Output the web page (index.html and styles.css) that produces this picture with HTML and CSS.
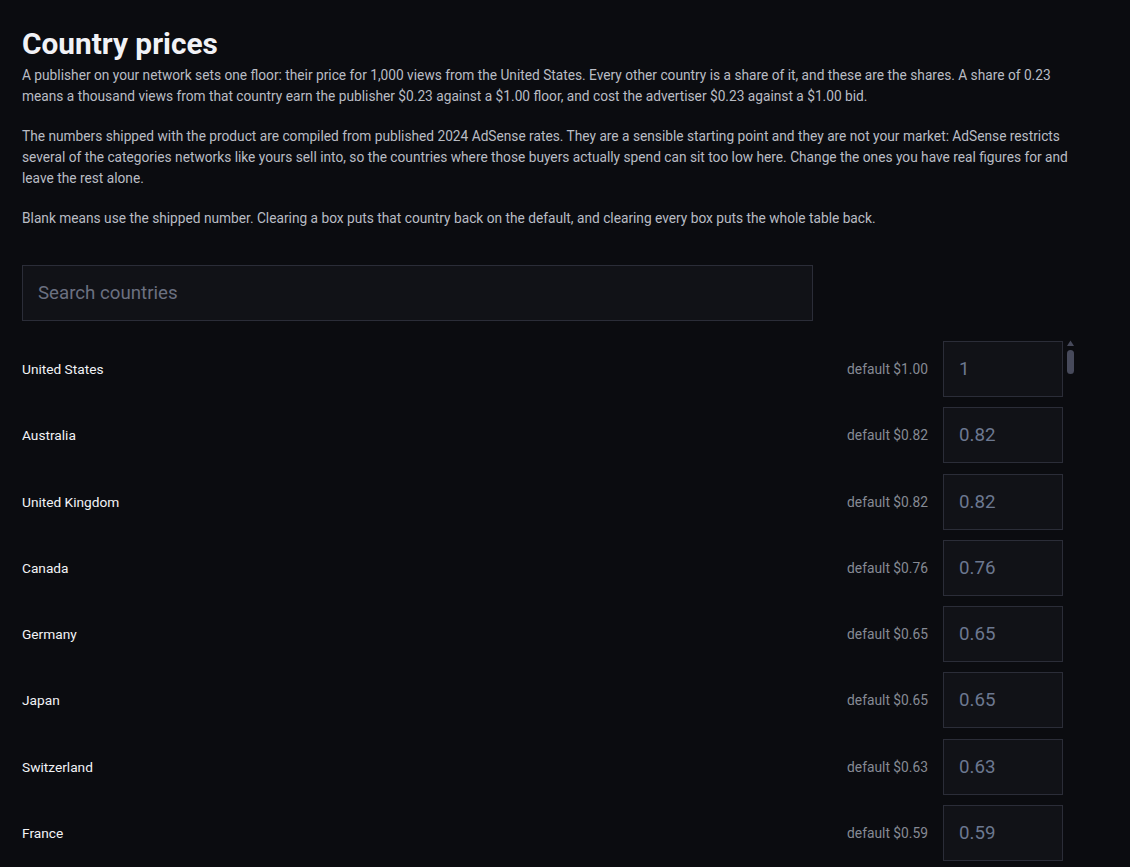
FILE: index.html
```html
<!DOCTYPE html>
<html lang="en">
<head>
<meta charset="utf-8">
<title>Country prices</title>
<link rel="stylesheet" href="styles.css">
</head>
<body>
<main class="page">
  <h1 class="title">Country prices</h1>
  <p class="intro">A publisher on your network sets one floor: their price for 1,000 views from the United States. Every other country is a share of it, and these are the shares. A share of 0.23 means a thousand views from that country earn the publisher $0.23 against a $1.00 floor, and cost the advertiser $0.23 against a $1.00 bid.</p>
  <p class="intro">The numbers shipped with the product are compiled from published 2024 AdSense rates. They are a sensible starting point and they are not your market: AdSense restricts several of the categories networks like yours sell into, so the countries where those buyers actually spend can sit too low here. Change the ones you have real figures for and leave the rest alone.</p>
  <p class="intro">Blank means use the shipped number. Clearing a box puts that country back on the default, and clearing every box puts the whole table back.</p>

  <input class="search" type="text" placeholder="Search countries">

  <div class="list-wrap">
    <div class="list" id="list">
      <div class="row"><span class="name">United States</span><span class="default">default $1.00</span><input class="share" type="text" placeholder="1"></div>
      <div class="row"><span class="name">Australia</span><span class="default">default $0.82</span><input class="share" type="text" placeholder="0.82"></div>
      <div class="row"><span class="name">United Kingdom</span><span class="default">default $0.82</span><input class="share" type="text" placeholder="0.82"></div>
      <div class="row"><span class="name">Canada</span><span class="default">default $0.76</span><input class="share" type="text" placeholder="0.76"></div>
      <div class="row"><span class="name">Germany</span><span class="default">default $0.65</span><input class="share" type="text" placeholder="0.65"></div>
      <div class="row"><span class="name">Japan</span><span class="default">default $0.65</span><input class="share" type="text" placeholder="0.65"></div>
      <div class="row"><span class="name">Switzerland</span><span class="default">default $0.63</span><input class="share" type="text" placeholder="0.63"></div>
      <div class="row"><span class="name">France</span><span class="default">default $0.59</span><input class="share" type="text" placeholder="0.59"></div>
      <div class="row"><span class="name">Netherlands</span><span class="default">default $0.57</span><input class="share" type="text" placeholder="0.57"></div>
    </div>
    <div class="scrollbar" aria-hidden="true">
      <svg class="scroll-arrow" width="11" height="7" viewBox="0 0 11 7"><polygon points="2,6 5.5,0.5 9,6" fill="#474a5b"/></svg>
      <div class="scroll-track"><div class="scroll-thumb" id="thumb"></div></div>
      <svg class="scroll-arrow" width="11" height="7" viewBox="0 0 11 7"><polygon points="2,1 5.5,6.5 9,1" fill="#474a5b"/></svg>
    </div>
  </div>
</main>
<script src="app.js"></script>
</body>
</html>
```

FILE: styles.css
```css
html, body {
  margin: 0;
  padding: 0;
  background: #0b0c10;
}

body {
  font-family: Roboto, "Liberation Sans", Arial, sans-serif;
  color: #b9bcc4;
}

.page {
  padding: 27px 22px 0 22px;
}

.title {
  margin: 0 0 4px 0;
  font-size: 29.8px;
  line-height: 34px;
  font-weight: 700;
  color: #f1f2f6;
}

.intro {
  max-width: 1060px;
  margin: 0 0 19px 0;
  font-size: 13.73px;
  line-height: 21px;
  color: #b9bcc4;
}

.intro:last-of-type {
  margin-bottom: 36px;
}

.search {
  display: block;
  box-sizing: border-box;
  width: 791px;
  height: 56px;
  margin: 0 0 20px 0;
  padding: 0 15px;
  background: #111217;
  border: 1px solid #2b2d38;
  border-radius: 0;
  color: #d0d3da;
  font-family: inherit;
  font-size: 18.7px;
  outline: none;
}

.search::placeholder {
  color: #6b7080;
}

.list-wrap {
  display: flex;
  width: 1054px;
  height: 560px;
}

.list {
  flex: 1 1 auto;
  min-width: 0;
  height: 100%;
  overflow-y: auto;
  scrollbar-width: none;
  display: flex;
  flex-direction: column;
  gap: 10.3px;
}

.list::-webkit-scrollbar {
  display: none;
}

.scrollbar {
  flex: 0 0 11px;
  display: flex;
  flex-direction: column;
  height: 100%;
}

.scroll-arrow {
  display: block;
  flex: 0 0 auto;
  margin-top: -1px;
}

.scroll-track {
  flex: 1 1 auto;
  padding-top: 3px;
}

.scroll-thumb {
  width: 7px;
  height: 24px;
  margin-left: 2px;
  border-radius: 4px;
  background: #474a5b;
}

.row {
  display: flex;
  align-items: center;
  flex: 0 0 auto;
  height: 56px;
  padding-right: 2px;
}

.name {
  flex: 1 1 auto;
  font-size: 13.7px;
  color: #f2f3f6;
}

.default {
  flex: 0 0 auto;
  margin-right: 15px;
  font-size: 13.8px;
  color: #868a94;
}

.share {
  flex: 0 0 auto;
  box-sizing: border-box;
  width: 120px;
  height: 56px;
  padding: 0 15px;
  background: #111217;
  border: 1px solid #2b2d38;
  border-radius: 0;
  color: #d0d3da;
  font-family: inherit;
  font-size: 18.7px;
  outline: none;
}

.share::placeholder {
  color: #6c7890;
}
```

FILE: app.js
```js
(function () {
  var names = [
    "Norway","Denmark","Sweden","New Zealand","Ireland","Belgium","Austria","Finland","Singapore","Luxembourg",
    "Iceland","Israel","Hong Kong","South Korea","Italy","Spain","United Arab Emirates","Qatar","Taiwan","Saudi Arabia",
    "Kuwait","Portugal","Czech Republic","Slovenia","Estonia","Poland","Greece","Slovakia","Lithuania","Latvia",
    "Hungary","Croatia","Cyprus","Malta","Bahrain","Oman","Chile","Uruguay","Puerto Rico","Mexico",
    "Brazil","Argentina","Romania","Bulgaria","Turkey","Malaysia","South Africa","Costa Rica","Panama","Colombia",
    "Peru","Thailand","China","Serbia","Montenegro","North Macedonia","Bosnia and Herzegovina","Albania","Kazakhstan","Georgia",
    "Armenia","Azerbaijan","Ukraine","Belarus","Moldova","Russia","Dominican Republic","Ecuador","Guatemala","Jamaica",
    "Trinidad and Tobago","Bahamas","Barbados","Paraguay","Bolivia","Honduras","El Salvador","Nicaragua","Venezuela","Cuba",
    "Philippines","Indonesia","Vietnam","India","Sri Lanka","Bangladesh","Pakistan","Nepal","Mongolia","Cambodia",
    "Laos","Myanmar","Brunei","Maldives","Bhutan","Jordan","Lebanon","Egypt","Morocco","Tunisia",
    "Algeria","Libya","Iraq","Iran","Syria","Yemen","Afghanistan","Uzbekistan","Kyrgyzstan","Tajikistan",
    "Turkmenistan","Nigeria","Kenya","Ghana","Ethiopia","Tanzania","Uganda","Rwanda","Senegal","Ivory Coast",
    "Cameroon","Angola","Zambia","Zimbabwe","Botswana","Namibia","Mozambique","Madagascar","Mauritius","Seychelles",
    "Malawi","Mali","Niger","Burkina Faso","Benin","Togo","Guinea","Sierra Leone","Liberia","Gambia",
    "Mauritania","Sudan","South Sudan","Somalia","Djibouti","Eritrea","Chad","Central African Republic","Congo","DR Congo",
    "Gabon","Equatorial Guinea","Burundi","Lesotho","Eswatini","Cape Verde","Comoros","Fiji","Papua New Guinea","Samoa",
    "Tonga","Vanuatu","Solomon Islands","Kiribati","Micronesia","Marshall Islands","Palau","Nauru","Tuvalu","Timor-Leste",
    "Haiti","Belize","Guyana","Suriname","Grenada","Saint Lucia","Dominica","Antigua and Barbuda","Saint Kitts and Nevis","Saint Vincent and the Grenadines",
    "Andorra","Monaco","Liechtenstein","San Marino","Greenland","Faroe Islands","Bermuda","Cayman Islands","Guam","Macau",
    "Gibraltar","Aruba","Curaçao","Kosovo","New Caledonia","French Polynesia","Réunion","Martinique","Guadeloupe","Jersey"
  ];
  var list = document.getElementById("list");
  var thumb = document.getElementById("thumb");
  var value = 0.57;
  names.forEach(function (name, i) {
    value = Math.max(0.01, value - (i < 40 ? 0.011 : 0.0018));
    var v = value.toFixed(2);
    var row = document.createElement("div");
    row.className = "row";
    var n = document.createElement("span");
    n.className = "name";
    n.textContent = name;
    var d = document.createElement("span");
    d.className = "default";
    d.textContent = "default $" + v;
    var input = document.createElement("input");
    input.className = "share";
    input.type = "text";
    input.placeholder = v;
    row.appendChild(n);
    row.appendChild(d);
    row.appendChild(input);
    list.appendChild(row);
  });

  function syncThumb() {
    var track = thumb.parentNode;
    var range = list.scrollHeight - list.clientHeight;
    var travel = track.clientHeight - thumb.offsetHeight - 6;
    var y = range > 0 ? (list.scrollTop / range) * travel : 0;
    thumb.style.transform = "translateY(" + y + "px)";
  }
  list.addEventListener("scroll", syncThumb);
  syncThumb();
})();
```
